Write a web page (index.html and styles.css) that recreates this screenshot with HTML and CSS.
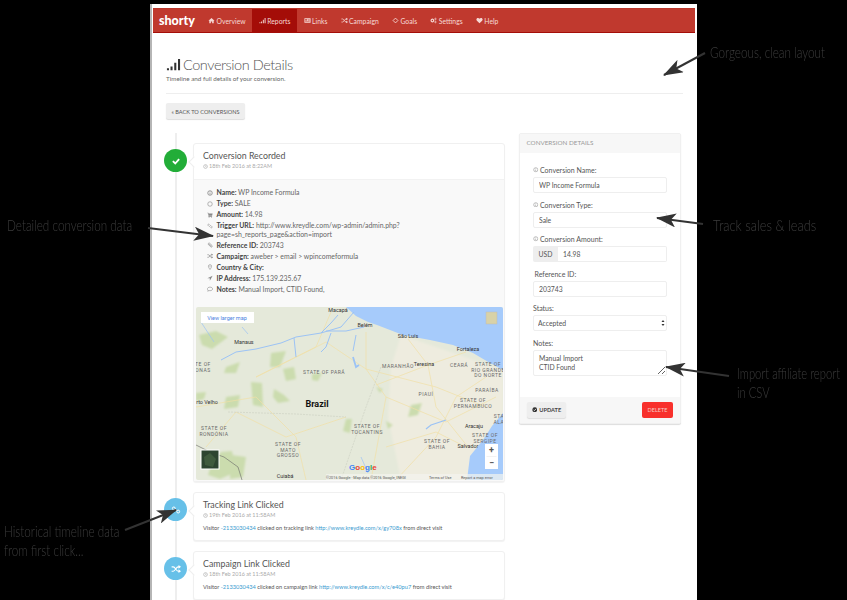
FILE: index.html
```html
<!DOCTYPE html>
<html lang="en">
<head>
<meta charset="utf-8">
<title>Conversion Details</title>
<link rel="stylesheet" href="styles.css">
</head>
<body>
<svg class="defs" width="0" height="0" aria-hidden="true">
  <defs>
    <filter id="soft" x="-5%" y="-5%" width="110%" height="110%"><feGaussianBlur stdDeviation="1"/></filter>
    <symbol id="i-home" viewBox="0 0 16 16"><path fill="currentColor" d="M8 2 1 8.500h2V14h3.500v-4h3v4H13V8.500h2z"/></symbol>
    <symbol id="i-signal" viewBox="0 0 16 16"><path fill="currentColor" d="M1 12h2.200v2H1zM4.800 10H7v4H4.800zM8.800 6H11v8H8.800zM12.800 2H15v12h-2.200z"/></symbol>
    <symbol id="i-card" viewBox="0 0 16 16"><path fill="currentColor" fill-rule="evenodd" d="M1 3h14v10H1zM2.500 5v3h5V5zm7 0v1H13V5zm0 2.500v1H13v-1zm-7 2.500v1.200H13V10z"/></symbol>
    <symbol id="i-random" viewBox="0 0 16 16"><path fill="none" stroke="currentColor" stroke-width="1.800" d="M1 4.500h2.500c3.500 0 4.500 7 8 7H14M1 11.500h2.500c3.500 0 4.500-7 8-7H14"/><path fill="currentColor" d="M12 1.500 16 4.500 12 7.500zM12 8.500 16 11.500 12 14.500z"/></symbol>
    <symbol id="i-goal" viewBox="0 0 16 16"><path fill="none" stroke="currentColor" stroke-width="2" d="M8 2.500 13.500 8 8 13.500 2.500 8z"/></symbol>
    <symbol id="i-cogs" viewBox="0 0 16 16"><circle cx="5.500" cy="8" r="3" fill="none" stroke="currentColor" stroke-width="2.600"/><circle cx="12.500" cy="4.500" r="1.700" fill="none" stroke="currentColor" stroke-width="1.600"/><circle cx="12.500" cy="11.500" r="1.700" fill="none" stroke="currentColor" stroke-width="1.600"/></symbol>
    <symbol id="i-heart" viewBox="0 0 16 16"><path fill="currentColor" d="M8 14.500 2 8.500C-.5 5.500 1.500 2 4.500 2 6 2 7.300 3 8 4.200 8.700 3 10 2 11.500 2c3 0 5 3.500 2.500 6.500z"/></symbol>
    <symbol id="i-check" viewBox="0 0 16 16"><path fill="none" stroke="currentColor" stroke-width="3" d="M3 8.200 6.800 12 13 5"/></symbol>
    <symbol id="i-clock" viewBox="0 0 16 16"><circle cx="8" cy="8" r="6" fill="none" stroke="currentColor" stroke-width="2"/><path fill="none" stroke="currentColor" stroke-width="1.500" d="M8 4.500V8.500h3"/></symbol>
    <symbol id="i-info" viewBox="0 0 16 16"><circle cx="8" cy="8" r="6" fill="none" stroke="currentColor" stroke-width="2.200"/><path fill="currentColor" d="M7 4h2v2H7zM7 7h2v5H7z"/></symbol>
    <symbol id="i-circle" viewBox="0 0 16 16"><circle cx="8" cy="8" r="6" fill="none" stroke="currentColor" stroke-width="1.600"/></symbol>
    <symbol id="i-cart" viewBox="0 0 16 16"><path fill="currentColor" d="M1 2h2.500l.5 2h11l-1.500 6H5.500L5.800 11.500H13.500V13H4L4.200 9.500 2.500 3.500H1z"/><circle cx="5.500" cy="14" r="1.200" fill="currentColor"/><circle cx="12" cy="14" r="1.200" fill="currentColor"/></symbol>
    <symbol id="i-link" viewBox="0 0 16 16"><path fill="none" stroke="currentColor" stroke-width="1.600" d="M7 4.500 5.500 3a2.300 2.300 0 0 0-3 3L5 8.500a2.300 2.300 0 0 0 3 0M9 11.500l1.500 1.500a2.300 2.300 0 0 0 3-3L11 7.500a2.300 2.300 0 0 0-3 0"/></symbol>
    <symbol id="i-clip" viewBox="0 0 16 16"><path fill="none" stroke="currentColor" stroke-width="1.700" d="M2.500 5.500 10 13a2.500 2.500 0 0 0 3.500-3.500L6 2.500A1.500 1.500 0 0 0 4 4.500L11 11.500"/></symbol>
    <symbol id="i-marker" viewBox="0 0 16 16"><path fill="none" stroke="currentColor" stroke-width="1.600" d="M8 14.500S3.800 9 3.800 6a4.200 4.200 0 0 1 8.400 0c0 3-4.200 8.500-4.200 8.500z"/><circle cx="8" cy="6" r="1.300" fill="currentColor"/></symbol>
    <symbol id="i-arrow" viewBox="0 0 16 16"><path fill="currentColor" d="M15 2 1 8.500h6.500V15z"/></symbol>
    <symbol id="i-comment" viewBox="0 0 16 16"><path fill="none" stroke="currentColor" stroke-width="1.500" d="M8 3c3.800 0 7 2 7 4.800s-3.200 4.700-7 4.700c-1 0-2-.1-2.800-.4L2 14l1-3C1.800 10.200 1 9 1 7.800 1 5 4.200 3 8 3z"/></symbol>
    <symbol id="i-share" viewBox="0 0 16 16"><circle cx="4.500" cy="5.500" r="2.300" fill="none" stroke="currentColor" stroke-width="1.600"/><circle cx="11.500" cy="10.500" r="2.300" fill="none" stroke="currentColor" stroke-width="1.600"/><path stroke="currentColor" stroke-width="1.600" d="M6.500 7 9.500 9"/></symbol>
    <symbol id="i-checkc" viewBox="0 0 16 16"><circle cx="8" cy="8" r="7" fill="currentColor"/><path fill="none" stroke="#eee" stroke-width="2.500" d="M4.500 8 7 10.500 11.500 5.500"/></symbol>
    <marker id="head" viewBox="0 0 20 14" refX="19" refY="7" markerWidth="20" markerHeight="14" markerUnits="userSpaceOnUse" orient="auto"><path fill="#333" d="M20 7 0 0 5 7 0 14z"/></marker>
  </defs>
</svg>

<div class="page">
  <nav class="navbar">
    <span class="brand">shorty</span>
    <a class="nav-item"><svg class="ni"><use href="#i-home"/></svg>Overview</a>
    <a class="nav-item active"><svg class="ni"><use href="#i-signal"/></svg>Reports</a>
    <a class="nav-item"><svg class="ni"><use href="#i-card"/></svg>Links</a>
    <a class="nav-item"><svg class="ni"><use href="#i-random"/></svg>Campaign</a>
    <a class="nav-item"><svg class="ni"><use href="#i-goal"/></svg>Goals</a>
    <a class="nav-item"><svg class="ni"><use href="#i-cogs"/></svg>Settings</a>
    <a class="nav-item"><svg class="ni"><use href="#i-heart"/></svg>Help</a>
  </nav>

  <div class="content">
    <header class="page-head">
      <h1 class="title"><svg class="title-icon"><use href="#i-signal"/></svg>Conversion Details</h1>
      <p class="subtitle">Timeline and full details of your conversion.</p>
    </header>
    <a class="btn back">« BACK TO CONVERSIONS</a>

    <div class="columns">
      <div class="timeline">
        <article class="tl-item">
          <div class="dot green"><svg class="dot-icon"><use href="#i-check"/></svg></div>
          <div class="card">
            <div class="card-head">
              <h2 class="card-title">Conversion Recorded</h2>
              <div class="time"><svg class="ti"><use href="#i-clock"/></svg>18th Feb 2016 at 8:22AM</div>
            </div>
            <div class="card-data">
              <ul class="facts">
                <li><svg class="fi"><use href="#i-info"/></svg><span><b>Name:</b> WP Income Formula</span></li>
                <li><svg class="fi"><use href="#i-circle"/></svg><span><b>Type:</b> SALE</span></li>
                <li><svg class="fi"><use href="#i-cart"/></svg><span><b>Amount:</b> 14.98</span></li>
                <li><svg class="fi"><use href="#i-link"/></svg><span><b>Trigger URL:</b> http://www.kreydle.com/wp-admin/admin.php?<br>page=sh_reports_page&amp;action=import</span></li>
                <li><svg class="fi"><use href="#i-clip"/></svg><span><b>Reference ID:</b> 203743</span></li>
                <li><svg class="fi"><use href="#i-random"/></svg><span><b>Campaign:</b> aweber &gt; email &gt; wpincomeformula</span></li>
                <li><svg class="fi"><use href="#i-marker"/></svg><span><b>Country &amp; City:</b></span></li>
                <li><svg class="fi"><use href="#i-arrow"/></svg><span><b>IP Address:</b> 175.139.235.67</span></li>
                <li><svg class="fi"><use href="#i-comment"/></svg><span><b>Notes:</b> Manual Import, CTID Found,</span></li>
              </ul>
              <svg class="map" viewBox="0 0 307 173" width="307" height="173" role="img" aria-label="Map of northern Brazil">
                <rect width="307" height="173" fill="#e5e9da"/>
                <g filter="url(#soft)">
                  <path fill="#eeecdf" d="M205 28 307 63V106L290 130 272 173H205L192 110 195 60z"/>
                  <g fill="#cbdcae">
                    <path d="M3 28 20 24 32 30 16 42 6 38z"/>
                    <path d="M75 46 90 44 84 60 74 60z"/>
                    <path d="M30 60 44 55 40 66 28 66z"/>
                    <path d="M87 62 98 60 100 72 90 74z"/>
                    <path d="M116 67 126 66 122 74 116 73z"/>
                    <path d="M55 75 66 76 67 100 57 98z"/>
                    <path d="M78 82 88 88 94 94 82 96 77 90z"/>
                    <path d="M30 90 44 88 42 100 28 102z"/>
                    <path d="M0 86 10 85 8 92 0 94z"/>
                    <path d="M150 112 156 112 154 126 147 124z"/>
                    <path d="M215 98 226 96 222 108 212 110z"/>
                    <path d="M180 80 187 82 184 86z"/>
                    <path d="M190 114 197 118 192 122z"/>
                    <path d="M25 145 36 144 40 165 24 172 12 168 16 155z"/>
                    <path d="M35 148 50 150 47 170 34 172z"/>
                  </g>
                </g>
                <path fill="#a6cbfb" d="M150 0 160 9 172 15 181 18 207 28 234 33 257 38 277 46 294 56 307 63V0z"/>
                <path fill="#a6cbfb" d="M307 106 296 119 287 133 274 149 271 173H307z"/>
                <g fill="none" stroke="#f0dfa6" stroke-width=".7">
                  <path d="M60 70 130 35 170 62 190 90 175 173"/>
                  <path d="M0 100 60 90 100 130 110 173"/>
                  <path d="M170 25 170 62 240 80 290 100"/>
                  <path d="M212 32 232 58 240 100 272 140"/>
                  <path d="M270 45 232 58 180 78"/>
                  <path d="M190 90 250 115 300 90"/>
                  <path d="M10 140 40 105 90 130 150 110"/>
                  <path d="M135 5 120 40 60 70"/>
                  <path d="M190 140 240 125 270 140"/>
                  <path d="M290 70 260 90 240 130 200 173"/>
                </g>
                <path fill="none" stroke="#cfd2c4" stroke-width=".7" stroke-dasharray="2 1" d="M32 105 100 107 150 110M185 60 170 100 145 173"/>
                <path fill="none" stroke="#666" stroke-width=".6" d="M0 138 14 145 28 150 42 160 46 173"/>
                <g fill="none" stroke="#9cc3f5" stroke-width="1">
                  <path d="M60 42 85 36 100 30 125 26 145 20 158 5"/>
                  <path d="M125 26 135 16 142 8M130 24 150 24 168 20"/>
                  <path d="M60 42 40 45 25 53"/>
                  <path d="M135 26 130 40 125 45"/>
                  <path d="M98 31 100 50M160 28 157 44"/>
                  <path d="M157 50 160 60 163 58" stroke-width="1.800"/>
                  <path d="M250 113 235 118 230 122" stroke-width="1.300"/>
                  <path d="M5 15 18 35M46 20 52 27" stroke-width=".7"/>
                  <path d="M165 150 172 166" stroke-width=".7"/>
                </g>
                <g class="map-label caps">
                  <text x="128" y="67">STATE OF PARÁ</text>
                  <text x="202" y="61">MARANHÃO</text>
                  <text x="263" y="60">CEARÁ</text>
                  <text x="292" y="59">STATE OF</text><text x="292" y="64.500">RIO GRANDE</text><text x="292" y="70">DO NORTE</text>
                  <text x="291" y="85">PARAÍBA</text>
                  <text x="230" y="89">PIAUÍ</text>
                  <text x="277" y="95">STATE OF</text><text x="277" y="100.500">PERNAMBUCO</text>
                  <text x="18" y="123">STATE OF</text><text x="18" y="128.500">RONDÔNIA</text>
                  <text x="171" y="121">STATE OF</text><text x="171" y="126.500">TOCANTINS</text>
                  <text x="92" y="139">STATE OF</text><text x="92" y="144.500">MATO</text><text x="92" y="150">GROSSO</text>
                  <text x="241" y="136">STATE OF</text><text x="241" y="141.500">BAHIA</text>
                  <text x="7" y="59">TE OF</text><text x="7" y="64.500">ONAS</text>
                  <text x="303" y="111">STA</text><text x="303" y="116.500">ALA</text>
                  <text x="289" y="130">STATE OF</text><text x="289" y="135.500">SERGIPE</text>
                </g>
                <g class="map-label city">
                  <text x="142" y="5">Macapá</text>
                  <text x="169" y="20">Belém</text>
                  <text x="212" y="31">São Luís</text>
                  <text x="272" y="44">Fortaleza</text>
                  <text x="48" y="37">Manaus</text>
                  <text x="228" y="59">Teresina</text>
                  <text x="11" y="97">rto Velho</text>
                  <text x="278" y="121">Aracaju</text>
                  <text x="272" y="141">Salvador</text>
                  <text x="89" y="171">Cuiabá</text>
                </g>
                <text class="map-country" x="121" y="100">Brazil</text>
                <rect x="5" y="5" width="53" height="11" fill="#fff"/>
                <text class="map-link" x="31" y="12.500">View larger map</text>
                <rect x="290" y="5" width="11" height="12" fill="#d8d2a8" stroke="#bbb" stroke-width=".5"/>
                <rect x="5" y="143" width="18" height="19" fill="#2d4431" stroke="#fff" stroke-width="1"/>
                <path d="M8 150 14 146 20 152 17 160 9 158z" fill="#3f5a3e"/>
                <rect x="289" y="137" width="13" height="25" fill="#fff"/>
                <path d="M290.500 149.500h10" stroke="#e5e5e5" stroke-width=".5"/>
                <text class="map-zoom" x="295.500" y="146">+</text>
                <text class="map-zoom" x="295.500" y="158.500">−</text>
                <text class="map-google" x="153" y="163"><tspan fill="#4285f4">G</tspan><tspan fill="#ea4335">o</tspan><tspan fill="#fbbc05">o</tspan><tspan fill="#4285f4">g</tspan><tspan fill="#34a853">l</tspan><tspan fill="#ea4335">e</tspan></text>
                <rect x="130" y="167" width="177" height="6" fill="#f4f4ee" opacity=".7"/>
                <g class="map-foot">
                  <text x="130" y="171.500">©2016 Google · Map data ©2016 Google, INEGI</text>
                  <text x="233" y="171.500">Terms of Use</text>
                  <text x="265" y="171.500">Report a map error</text>
                </g>
              </svg>
            </div>
          </div>
        </article>

        <article class="tl-item">
          <div class="dot blue"><svg class="dot-icon"><use href="#i-share"/></svg></div>
          <div class="card">
            <div class="card-head compact">
              <h2 class="card-title">Tracking Link Clicked</h2>
              <div class="time"><svg class="ti"><use href="#i-clock"/></svg>19th Feb 2016 at 11:58AM</div>
              <p class="event">Visitor <a>-2133030434</a> clicked on tracking link <a>http://www.kreydle.com/x/gy708x</a> from direct visit</p>
            </div>
          </div>
        </article>

        <article class="tl-item">
          <div class="dot blue"><svg class="dot-icon"><use href="#i-random"/></svg></div>
          <div class="card">
            <div class="card-head compact">
              <h2 class="card-title">Campaign Link Clicked</h2>
              <div class="time"><svg class="ti"><use href="#i-clock"/></svg>18th Feb 2016 at 11:58AM</div>
              <p class="event">Visitor <a>-2133030434</a> clicked on campaign link <a>http://www.kreydle.com/x/c/e40pu7</a> from direct visit</p>
            </div>
          </div>
        </article>
      </div>

      <aside class="panel">
        <div class="panel-head">CONVERSION DETAILS</div>
        <form class="panel-body">
          <div class="field">
            <label class="lbl"><svg class="li"><use href="#i-info"/></svg>Conversion Name:</label>
            <input class="ctl" value="WP Income Formula">
          </div>
          <div class="field">
            <label class="lbl"><svg class="li"><use href="#i-info"/></svg>Conversion Type:</label>
            <input class="ctl" value="Sale">
          </div>
          <div class="field">
            <label class="lbl"><svg class="li"><use href="#i-info"/></svg>Conversion Amount:</label>
            <div class="group"><span class="addon">USD</span><input class="ctl grow" value="14.98"></div>
          </div>
          <div class="field">
            <label class="lbl indent">Reference ID:</label>
            <input class="ctl" value="203743">
          </div>
          <div class="field">
            <label class="lbl">Status:</label>
            <div class="select-wrap">
              <select class="ctl sel"><option>Accepted</option></select>
              <svg class="updown" viewBox="0 0 6 10"><path fill="#333" d="M3 0 5.500 3.500H.5zM3 10 .5 6.500h5z"/></svg>
            </div>
          </div>
          <div class="field">
            <label class="lbl">Notes:</label>
            <textarea class="ctl area">Manual Import
CTID Found</textarea>
          </div>
        </form>
        <div class="panel-foot">
          <a class="btn update"><svg class="ui"><use href="#i-checkc"/></svg>UPDATE</a>
          <a class="btn delete">DELETE</a>
        </div>
      </aside>
    </div>
  </div>
</div>

<div class="note n1">Gorgeous, clean layout</div>
<div class="note n2">Detailed conversion data</div>
<div class="note n3">Track sales &amp; leads</div>
<div class="note n4">Import affiliate report<br>in CSV</div>
<div class="note n5">Historical timeline data<br>from first click...</div>

<svg class="arrows" width="847" height="600" aria-hidden="true">
  <g fill="none" stroke="#333" stroke-width="2" marker-end="url(#head)">
    <path d="M705 53 664 75"/>
    <path d="M148 228 213 236"/>
    <path d="M703 224 657 218"/>
    <path d="M729 376 666 367"/>
    <path d="M125 530 176 510"/>
  </g>
</svg>
</body>
</html>
```
FILE: styles.css
```css
* { box-sizing: border-box; }
html, body { margin: 0; height: 600px; overflow: hidden; background: #000; }
body { position: relative; font-family: Lato, "Open Sans", sans-serif; color: #555; }
.defs { position: absolute; }
svg { display: block; flex: none; }

.page {
  width: 547px; height: 600px; margin: 4px 0 0 150px; padding-top: 4px;
  background: #fff; border-left: 2px solid #b5b5b5; overflow: hidden;
}
.navbar {
  display: flex; align-items: stretch; height: 25px; margin: 0 2px 0 1px; padding-left: 6px;
  background: #c0392e; border-bottom: 1px solid #a40d08; border-top: 1px solid #b8352a;
}
.brand { width: 42.500px; align-self: center; color: #fff; font-weight: 900; font-size: 12.500px; }
.nav-item { display: flex; align-items: center; gap: 1.500px; padding: 0 6.600px; color: #f6d9d5; font-size: 6.800px; }
.nav-item.active { background: #a40d08; }
.ni { width: 7px; height: 7px; }

.content { padding: 0 14px; }
.page-head { height: 61px; padding-top: 21px; border-bottom: 1px solid #eee; }
.title { display: flex; align-items: center; margin: 0; height: 20px; font-size: 14.500px; letter-spacing: -.45px; font-weight: 300; color: #555; }
.title-icon { width: 15px; height: 15px; margin-right: 2px; color: #333; }
.subtitle { margin: 1px 0 0; font-size: 6.300px; font-weight: 400; line-height: 8px; color: #666; }

.btn { display: flex; align-items: center; justify-content: center; height: 16px; border-radius: 2px; font-size: 5.600px; font-weight: 400; }
.back { width: 79px; margin-top: 9px; background: #eee; color: #555; box-shadow: 0 1px 1px #ddd; }

.columns { display: flex; gap: 14px; align-items: flex-start; margin-top: 14px; }
.timeline { position: relative; width: 341px; margin-left: -2px; padding-top: 10px; }
.timeline::before { content: ""; position: absolute; left: 10.500px; top: 0; bottom: 0; width: 2px; background: #eee; }
.tl-item { position: relative; display: flex; gap: 6px; align-items: flex-start; margin-bottom: 10px; }
.dot { position: relative; display: flex; align-items: center; justify-content: center; width: 23px; height: 23px; margin-top: 6px; border-radius: 50%; color: #fff; }
.dot.green { background: #22ad38; }
.dot.blue { background: #67c0e8; }
.dot-icon { width: 10px; height: 10px; }

.card { position: relative; width: 312px; background: #fff; border: 1px solid #f0f0f0; border-radius: 3px; box-shadow: 0 1px 1px #f2f2f2; }
.card::before { content: ""; position: absolute; left: -4px; top: 14px; width: 7px; height: 7px; background: #fff; border-left: 1px solid #eee; border-bottom: 1px solid #eee; transform: rotate(45deg); }
.card-head { height: 35px; padding: 6px 9px 0; }
.card-head.compact { height: 47px; }
.card-title { margin: 0; font-size: 8.800px; line-height: 12px; font-weight: 400; color: #555; }
.time { display: flex; align-items: center; gap: 1px; margin-top: 1px; font-size: 5.500px; line-height: 7px; color: #aaa; }
.ti { width: 5px; height: 5px; }
.event { margin: 5px 0 0; font-size: 5.700px; line-height: 8px; color: #555; }
.event a { color: #3a9bd0; }

.card-data { padding: 8px 2px 1px; background: #f9f9f9; border-top: 1px solid #f2f2f2; }
.facts { margin: 0 0 14px; padding: 0 0 0 11px; list-style: none; font-size: 6.900px; line-height: 8.500px; color: #666; }
.facts li { display: flex; gap: 3.500px; margin-bottom: 2.500px; }
.facts b { color: #444; font-weight: 700; }
.fi { width: 6px; height: 6px; margin-top: 1.500px; color: #888; }
.map { border-radius: 2px; }

.map-label text { font-family: Roboto, sans-serif; text-anchor: middle; }
.caps text { font-size: 5px; letter-spacing: .5px; fill: #6a6a6a; }
.city text { font-size: 5.400px; fill: #333; }
.map-country { font-family: Roboto, sans-serif; font-size: 9px; font-weight: 700; text-anchor: middle; fill: #111; }
.map-link { font-family: Roboto, sans-serif; font-size: 5.500px; text-anchor: middle; fill: #4a7fe0; }
.map-zoom { font-family: Roboto, sans-serif; font-size: 9px; font-weight: 700; text-anchor: middle; fill: #555; }
.map-google { font-family: "Liberation Sans", sans-serif; font-size: 8px; font-weight: 700; }
.map-foot text { font-family: Roboto, sans-serif; font-size: 3.800px; fill: #555; }

.panel { width: 162px; background: #fff; border: 1px solid #f0f0f0; border-radius: 2px; box-shadow: 0 1px 1px #ddd; }
.panel-head { height: 19px; padding-left: 6.500px; background: #f7f7f7; font-size: 6.300px; line-height: 18px; color: #999; }
.panel-body { display: flex; flex-direction: column; gap: 6.500px; padding: 12px 13px 21px; }
.field { height: 28px; }
.field:last-child { height: 38px; }
.lbl { display: flex; align-items: center; gap: 1.500px; height: 10px; margin-bottom: 2px; font-size: 7px; color: #555; }
.lbl.indent { padding-left: 1.500px; }
.li { width: 5.500px; height: 5.500px; color: #aaa; }
.ctl { display: block; width: 134px; height: 16px; padding: 0 5px; background: #fff; border: 1px solid #eee; border-radius: 2px; outline: none; font-family: Lato, sans-serif; font-size: 6.800px; color: #555; }
.group { display: flex; }
.addon { display: flex; align-items: center; justify-content: center; width: 25px; height: 16px; background: #eee; border-radius: 2px 0 0 2px; font-size: 6.800px; color: #555; }
.grow { flex: 1; width: auto; border-left: 0; border-radius: 0 2px 2px 0; }
.select-wrap { position: relative; }
.sel { appearance: none; padding-left: 4px; }
.updown { position: absolute; right: 2.500px; top: 5px; width: 4px; height: 6px; }
.area { height: 26px; padding: 3.500px 5px; line-height: 9px; resize: both; overflow: hidden; }

.panel-foot { display: flex; justify-content: space-between; height: 26px; padding: 5px 7px 0; background: #f7f7f7; }
.update { gap: 2px; width: 39px; background: #eee; color: #444; box-shadow: 0 1px 1px #ddd; font-weight: 700; }
.ui { width: 5.500px; height: 5.500px; color: #333; }
.delete { width: 31px; background: #f8302c; color: #f5c9c5; }

.note { position: absolute; transform: scaleX(.755); transform-origin: left top; font-family: Lato, sans-serif; font-weight: 300; font-size: 15.500px; line-height: 18.500px; color: #3c3c3c; white-space: nowrap; }
.n1 { left: 710px; top: 43px; }
.n2 { left: 7px; top: 216px; }
.n3 { left: 713px; top: 216px; transform: scaleX(.83); }
.n4 { left: 737px; top: 364px; transform: scaleX(.725); }
.n5 { left: 4px; top: 522px; }
.arrows { position: absolute; left: 0; top: 0; pointer-events: none; }
```
